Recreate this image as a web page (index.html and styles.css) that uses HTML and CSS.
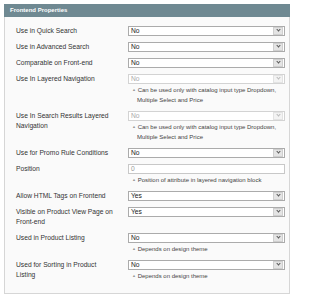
FILE: index.html
```html
<!DOCTYPE html>
<html>
<head>
<meta charset="utf-8">
<link rel="stylesheet" href="styles.css">
</head>
<body>
<div class="panel">
  <div class="head">Frontend Properties</div>
  <div class="body">
    <div class="row"><div class="label">Use in Quick Search</div><div class="value"><div class="sel"><span>No</span><i class="arr"></i></div></div></div>
    <div class="row"><div class="label">Use in Advanced Search</div><div class="value"><div class="sel"><span>No</span><i class="arr"></i></div></div></div>
    <div class="row"><div class="label">Comparable on Front-end</div><div class="value"><div class="sel"><span>No</span><i class="arr"></i></div></div></div>
    <div class="row"><div class="label">Use In Layered Navigation</div><div class="value"><div class="sel dis"><span>No</span><i class="arr"></i></div><div class="note"><b>▲</b> Can be used only with catalog input type Dropdown, Multiple Select and Price</div></div></div>
    <div class="row"><div class="label">Use In Search Results Layered Navigation</div><div class="value"><div class="sel dis"><span>No</span><i class="arr"></i></div><div class="note"><b>▲</b> Can be used only with catalog input type Dropdown, Multiple Select and Price</div></div></div>
    <div class="row"><div class="label">Use for Promo Rule Conditions</div><div class="value"><div class="sel"><span>No</span><i class="arr"></i></div></div></div>
    <div class="row"><div class="label">Position</div><div class="value"><div class="inp"><span>0</span></div><div class="note"><b>▲</b> Position of attribute in layered navigation block</div></div></div>
    <div class="row"><div class="label">Allow HTML Tags on Frontend</div><div class="value"><div class="sel"><span>Yes</span><i class="arr"></i></div></div></div>
    <div class="row"><div class="label">Visible on Product View Page on Front-end</div><div class="value"><div class="sel"><span>Yes</span><i class="arr"></i></div></div></div>
    <div class="row"><div class="label">Used in Product Listing</div><div class="value"><div class="sel"><span>No</span><i class="arr"></i></div><div class="note"><b>▲</b> Depends on design theme</div></div></div>
    <div class="row"><div class="label">Used for Sorting in Product Listing</div><div class="value"><div class="sel"><span>No</span><i class="arr"></i></div><div class="note"><b>▲</b> Depends on design theme</div></div></div>
  </div>
</div>
</body>
</html>
```
FILE: styles.css
```css
html, body { margin: 0; padding: 0; background: #fff; }
body { font-family: "Liberation Sans", Arial, sans-serif; color: #333; }
.panel { margin: 4px 0 0 4px; width: 286px; }
.head {
  background: #6f8992;
  color: #fff;
  font-weight: bold;
  font-size: 6px;
  line-height: 13px;
  height: 13px;
  padding-left: 6px;
}
.body {
  background: #fafafa;
  border: 1px solid #d6d6d6;
  border-top: none;
  padding: 6px 0 9px 11px;
}
.row { display: flex; padding: 3px 0; }
.label { width: 99px; margin-right: 13px; font-size: 6.7px; line-height: 10px; }
.value { width: 157px; }
.sel, .inp {
  height: 10px;
  box-sizing: border-box;
  border: 1px solid #ababab;
  background: #fff;
  display: flex;
  align-items: center;
  justify-content: space-between;
  font-size: 6.7px;
  color: #222;
}
.sel span, .inp span { padding-left: 2px; line-height: 8px; }
.arr {
  width: 10px;
  height: 8px;
  box-sizing: border-box;
  margin-right: 1px;
  background: #e4e4e4;
  border: 1px solid #cfcfcf;
  position: relative;
}
.arr::after {
  content: "";
  position: absolute;
  left: 3px;
  top: 0px;
  width: 2px;
  height: 2px;
  border-right: 1px solid #555;
  border-bottom: 1px solid #555;
  transform: rotate(45deg);
}
.sel.dis { border-color: #d3d3d3; color: #aaa; }
.sel.dis .arr { background: #f3f3f3; border-color: #e3e3e3; }
.sel.dis .arr::after { border-color: #bbb; }
.inp { border-color: #c8c8c8; color: #999; }
.note { font-size: 6px; line-height: 10px; color: #444; padding-left: 9px; text-indent: -5px; margin-top: 1px; }
.note b { font-weight: normal; color: #999; font-size: 4px; vertical-align: 1px; }
```
